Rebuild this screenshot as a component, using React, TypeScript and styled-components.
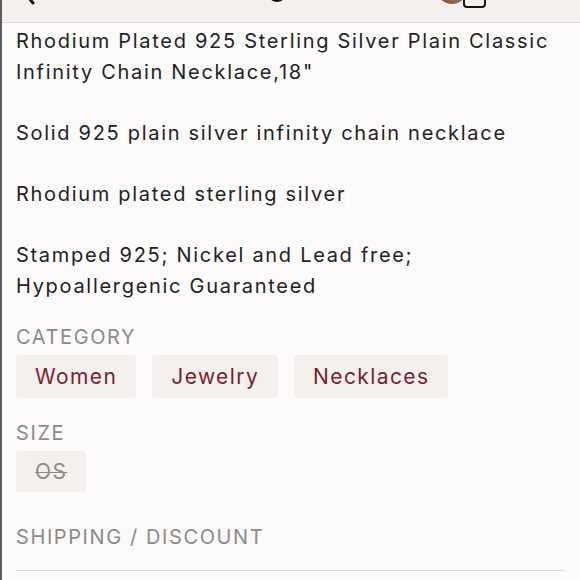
import React from "react";
import styled, { createGlobalStyle } from "styled-components";

const Global = createGlobalStyle`
  html, body { margin: 0; padding: 0; background: #fcfafa; }
  body { font-family: "Inter", "Open Sans", sans-serif; overflow: hidden; }
`;

const Page = styled.div`
  width: 580px;
  height: 580px;
  overflow: hidden;
  border-left: 2px solid #5c5c5c;
  box-sizing: border-box;
  background: #fcfafa;
`;

const Header = styled.header`
  height: 56px;
  margin-top: -34px;
  background: #f3f0ed;
  border-bottom: 1px solid #dcd8d5;
  display: grid;
  grid-template-columns: 1fr auto 1fr;
  align-items: start;
  padding: 0 94px 0 19px;
`;

const BackIcon = styled.svg`
  margin-top: 12px;
  display: block;
`;

const Title = styled.h1`
  margin: 6px 0 0 74px;
  font-size: 27px;
  line-height: 30px;
  font-weight: 700;
  color: #111;
  letter-spacing: 0.2px;
`;

const HeaderRight = styled.div`
  display: flex;
  justify-content: flex-end;
  align-items: flex-start;
`;

const Avatar = styled.div`
  width: 30px;
  height: 30px;
  margin-top: 8px;
  border-radius: 50%;
  background: radial-gradient(circle at 60% 70%, #b07a5c 0%, #7a4a35 55%, #5a3322 100%);
`;

const Bag = styled.div`
  width: 23px;
  height: 30px;
  margin: 12px 0 0 -4px;
  box-sizing: border-box;
  border: 2px solid #151515;
  border-radius: 4px;
  background: #f3f0ed;
`;

const Content = styled.main`
  padding: 3px 16px 0 14px;
  color: #222;
`;

const Description = styled.p`
  margin: 0;
  font-size: 20px;
  line-height: 30.6px;
  letter-spacing: 1.7px;
`;

const Label = styled.h2`
  margin: 0;
  font-size: 20px;
  line-height: 30px;
  font-weight: 400;
  color: #8d8b89;
  text-transform: uppercase;
  letter-spacing: 1.6px;
`;

const ChipRow = styled.div`
  display: flex;
  gap: 16px;
  margin-top: 3px;
`;

const Chip = styled.span<{ $muted?: boolean }>`
  display: inline-flex;
  align-items: center;
  height: ${(p) => (p.$muted ? "41px" : "43px")};
  padding: 0 19px;
  border-radius: 4px;
  background: #f3f0ee;
  font-size: 21px;
  color: ${(p) => (p.$muted ? "#8d8b89" : "#7a1f2d")};
  text-decoration: ${(p) => (p.$muted ? "line-through" : "none")};
  text-decoration-thickness: 1px;
  letter-spacing: 1.4px;
`;

const Section = styled.section<{ $top: number }>`
  margin-top: ${(p) => p.$top}px;
`;

const Divider = styled.hr`
  margin: 18px 0 0 0;
  border: none;
  border-top: 1px solid #dddbd9;
`;

export default function App() {
  return (
    <Page>
      <Global />
      <Header>
        <BackIcon width="16" height="30" viewBox="0 0 16 30">
          <path d="M12 3 L3 14 L12 25" stroke="#111" strokeWidth="3" strokeLinecap="round" strokeLinejoin="round" fill="none" />
        </BackIcon>
        <Title>Listing Details</Title>
        <HeaderRight>
          <Avatar />
          <Bag />
        </HeaderRight>
      </Header>
      <Content>
        <Description>
          Rhodium Plated 925 Sterling Silver Plain Classic Infinity Chain Necklace,18"
          <br />
          <br />
          Solid 925 plain silver infinity chain necklace
          <br />
          <br />
          Rhodium plated sterling silver
          <br />
          <br />
          Stamped 925; Nickel and Lead free; Hypoallergenic Guaranteed
        </Description>
        <Section $top={21}>
          <Label>Category</Label>
          <ChipRow>
            <Chip>Women</Chip>
            <Chip>Jewelry</Chip>
            <Chip>Necklaces</Chip>
          </ChipRow>
        </Section>
        <Section $top={20}>
          <Label>Size</Label>
          <ChipRow>
            <Chip $muted>OS</Chip>
          </ChipRow>
        </Section>
        <Section $top={30}>
          <Label>Shipping / Discount</Label>
          <Divider />
        </Section>
      </Content>
    </Page>
  );
}
